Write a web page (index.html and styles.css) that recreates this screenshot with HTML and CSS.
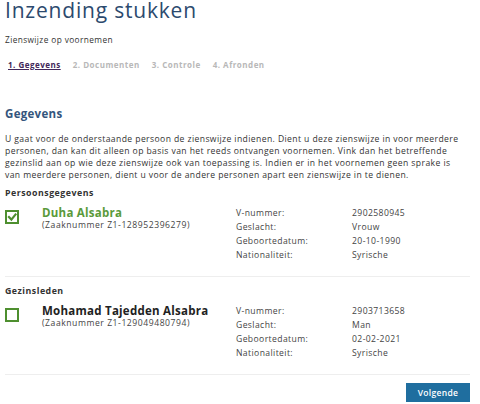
FILE: index.html
```html
<!DOCTYPE html>
<html lang="nl">
<head>
<meta charset="utf-8">
<link rel="stylesheet" href="styles.css">
</head>
<body>
<div class="page">
  <h1 class="title">Inzending stukken</h1>
  <div class="subtitle">Zienswijze op voornemen</div>
  <nav class="steps">
    <span class="step active">1. Gegevens</span>
    <span class="step">2. Documenten</span>
    <span class="step">3. Controle</span>
    <span class="step">4. Afronden</span>
  </nav>
  <h2 class="heading">Gegevens</h2>
  <p class="intro">U gaat voor de onderstaande persoon de zienswijze indienen. Dient u deze zienswijze in voor meerdere personen, dan kan dit alleen op basis van het reeds ontvangen voornemen. Vink dan het betreffende gezinslid aan op wie deze zienswijze ook van toepassing is. Indien er in het voornemen geen sprake is van meerdere personen, dient u voor de andere personen apart een zienswijze in te dienen.</p>

  <h3 class="group">Persoonsgegevens</h3>
  <div class="person">
    <div class="check checked">
      <svg viewBox="0 0 14 14" width="14" height="14"><rect x="1" y="1" width="12" height="12" fill="none" stroke="#4e8f2f" stroke-width="2"/><path d="M3.2 6.2 L6.4 9.6 L11.2 3.6" fill="none" stroke="#4e8f2f" stroke-width="2.2"/></svg>
    </div>
    <div class="who">
      <div class="name green">Duha Alsabra</div>
      <div class="case">(Zaaknummer Z1-128952396279)</div>
    </div>
    <dl class="facts">
      <dt>V-nummer:</dt><dd>2902580945</dd>
      <dt>Geslacht:</dt><dd>Vrouw</dd>
      <dt>Geboortedatum:</dt><dd>20-10-1990</dd>
      <dt>Nationaliteit:</dt><dd>Syrische</dd>
    </dl>
  </div>

  <h3 class="group">Gezinsleden</h3>
  <div class="person">
    <div class="check">
      <svg viewBox="0 0 14 14" width="14" height="14"><rect x="1" y="1" width="12" height="12" fill="none" stroke="#4e8f2f" stroke-width="2"/></svg>
    </div>
    <div class="who">
      <div class="name">Mohamad Tajedden Alsabra</div>
      <div class="case">(Zaaknummer Z1-129049480794)</div>
    </div>
    <dl class="facts">
      <dt>V-nummer:</dt><dd>2903713658</dd>
      <dt>Geslacht:</dt><dd>Man</dd>
      <dt>Geboortedatum:</dt><dd>02-02-2021</dd>
      <dt>Nationaliteit:</dt><dd>Syrische</dd>
    </dl>
  </div>

  <div class="actions">
    <button class="next">Volgende</button>
  </div>
</div>
</body>
</html>
```
FILE: styles.css
```css
html, body {
  margin: 0;
  padding: 0;
  background: #ffffff;
}
body {
  font-family: "Open Sans", "Liberation Sans", sans-serif;
  color: #333333;
}
.page {
  padding: 0 10px 0 5px;
}
.title {
  margin: -2px 0 0;
  font-size: 21px;
  line-height: 24px;
  font-weight: 400;
  color: #2c4a6e;
  letter-spacing: 0.8px;
}
.subtitle {
  margin-top: 12px;
  font-size: 8.3px;
  line-height: 12px;
  letter-spacing: 0.4px;
  color: #333;
}
.steps {
  display: flex;
  gap: 12px;
  margin-top: 13px;
  padding-left: 3px;
  font-size: 8px;
  line-height: 11px;
  letter-spacing: 0.5px;
  font-weight: 700;
}
.step {
  color: #b8b8b8;
}
.step.active {
  color: #42275a;
  text-decoration: underline;
  text-underline-offset: 1px;
}
.heading {
  margin: 37px 0 0;
  font-size: 11.5px;
  line-height: 14px;
  letter-spacing: 0.3px;
  font-weight: 700;
  color: #34557d;
}
.intro {
  margin: 12px 0 0;
  font-size: 8.6px;
  line-height: 12px;
  letter-spacing: 0.4px;
  color: #333;
  max-width: 462px;
}
.group {
  margin: 6px 0 0;
  font-size: 8.8px;
  line-height: 12px;
  letter-spacing: 0.5px;
  font-weight: 700;
  color: #333;
}
.person {
  display: flex;
  align-items: flex-start;
  padding: 7px 0 14px;
  border-bottom: 1px solid #eeeeee;
  margin-bottom: 8px;
  width: 465px;
}
.check {
  width: 37px;
  padding-top: 4px;
  flex: none;
}
.check svg {
  display: block;
}
.who {
  width: 194px;
  flex: none;
}
.name {
  font-size: 11.5px;
  line-height: 14px;
  letter-spacing: 0.25px;
  font-weight: 700;
  color: #222;
}
.name.green {
  color: #5a9a3a;
}
.case {
  font-size: 8.6px;
  line-height: 11px;
  letter-spacing: 0.55px;
  color: #444;
}
.facts {
  margin: 0;
  display: grid;
  grid-template-columns: 116px auto;
  font-size: 8.6px;
  line-height: 14px;
  letter-spacing: 0.4px;
  color: #444;
}
.facts dt, .facts dd {
  margin: 0;
}
.actions {
  display: flex;
  justify-content: flex-end;
  padding-top: 0;
  width: 465px;
}
.next {
  font-family: "Open Sans", "Liberation Sans", sans-serif;
  background: #1f6e9f;
  color: #ffffff;
  border: 0;
  font-size: 8.5px;
  letter-spacing: 0.3px;
  font-weight: 600;
  height: 19px;
  width: 64px;
  padding: 0;
}
```
